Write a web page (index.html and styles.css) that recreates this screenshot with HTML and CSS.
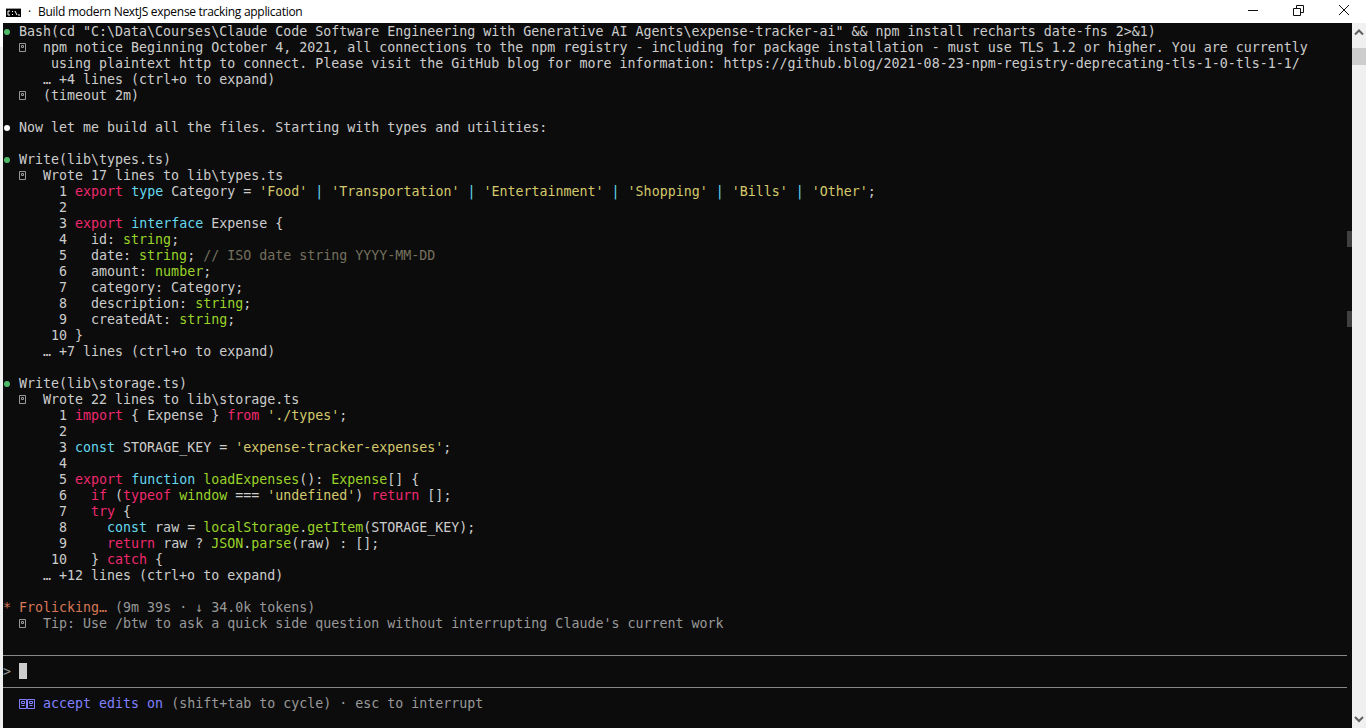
FILE: index.html
```html
<!DOCTYPE html>
<html lang="en">
<head>
    <meta charset="UTF-8">
    <title>Build modern NextJS expense tracking application</title>
    <link rel="stylesheet" href="styles.css">
</head>
<body>

<div class="titlebar">
    <svg class="app-icon" width="15" height="9" viewBox="0 0 15 9">
        <rect width="15" height="9" fill="#000"/>
        <rect x="0" y="0" width="15" height="1" fill="#9a9a9a"/>
        <path d="M4 3H2V7H4M6 3.5H7M6 6.5H7M9 3L11 7M12 7H14" fill="none" stroke="#fff" stroke-width="1"/>
    </svg>
    <span class="title-dot">·</span>
    <span class="title-text">Build modern NextJS expense tracking application</span>
    <div class="win-controls">
        <svg width="46" height="23" viewBox="0 0 46 23"><path d="M20 10.5H30" stroke="#111" fill="none"/></svg>
        <svg width="46" height="23" viewBox="0 0 46 23"><path d="M19.5 8.5H26.5V15.5H19.5ZM22.5 8.5V5.5H29.5V12.5H26.5" stroke="#111" fill="none"/></svg>
        <svg width="46" height="23" viewBox="0 0 46 23"><path d="M19 5L29 15M29 5L19 15" stroke="#111" fill="none"/></svg>
    </div>
</div>

<div class="window">
    <div class="left-edge"></div>

    <div class="terminal">
        <div class="row"><svg class="dot" viewBox="0 0 8 16"><circle cx="4" cy="9" r="3" fill="#4eba65"/></svg> Bash(cd "C:\Data\Courses\Claude Code Software Engineering with Generative AI Agents\expense-tracker-ai" &amp;&amp; npm install recharts date-fns 2&gt;&amp;1)</div>
        <div class="row">  <svg class="tofu" viewBox="0 0 8 16"><path d="M.5 4.5H6.5V12.5H.5ZM2.5 6.5H4.5V8.5H2.5Z" fill="none" stroke="currentColor"/></svg>  npm notice Beginning October 4, 2021, all connections to the npm registry - including for package installation - must use TLS 1.2 or higher. You are currently</div>
        <div class="row">      using plaintext http to connect. Please visit the GitHub blog for more information: https://github.blog/2021-08-23-npm-registry-deprecating-tls-1-0-tls-1-1/</div>
        <div class="row">     … +4 lines (ctrl+o to expand)</div>
        <div class="row">  <svg class="tofu" viewBox="0 0 8 16"><path d="M.5 4.5H6.5V12.5H.5ZM2.5 6.5H4.5V8.5H2.5Z" fill="none" stroke="currentColor"/></svg>  (timeout 2m)</div>
        <div class="row"> </div>
        <div class="row"><svg class="dot" viewBox="0 0 8 16"><circle cx="4" cy="9" r="3" fill="#fff"/></svg> Now let me build all the files. Starting with types and utilities:</div>
        <div class="row"> </div>
        <div class="row"><svg class="dot" viewBox="0 0 8 16"><circle cx="4" cy="9" r="3" fill="#4eba65"/></svg> Write(lib\types.ts)</div>
        <div class="row">  <svg class="tofu" viewBox="0 0 8 16"><path d="M.5 4.5H6.5V12.5H.5ZM2.5 6.5H4.5V8.5H2.5Z" fill="none" stroke="currentColor"/></svg>  Wrote 17 lines to lib\types.ts</div>
        <div class="row">       1 <span class="kw">export</span> <span class="ty">type</span> Category = <span class="str">'Food'</span> <span class="ty">|</span> <span class="str">'Transportation'</span> <span class="ty">|</span> <span class="str">'Entertainment'</span> <span class="ty">|</span> <span class="str">'Shopping'</span> <span class="ty">|</span> <span class="str">'Bills'</span> <span class="ty">|</span> <span class="str">'Other'</span>;</div>
        <div class="row">       2</div>
        <div class="row">       3 <span class="kw">export</span> <span class="ty">interface</span> Expense {</div>
        <div class="row">       4   id: <span class="fn">string</span>;</div>
        <div class="row">       5   date: <span class="fn">string</span>; <span class="cmt">// ISO date string YYYY-MM-DD</span></div>
        <div class="row">       6   amount: <span class="fn">number</span>;</div>
        <div class="row">       7   category: Category;</div>
        <div class="row">       8   description: <span class="fn">string</span>;</div>
        <div class="row">       9   createdAt: <span class="fn">string</span>;</div>
        <div class="row">      10 }</div>
        <div class="row">     … +7 lines (ctrl+o to expand)</div>
        <div class="row"> </div>
        <div class="row"><svg class="dot" viewBox="0 0 8 16"><circle cx="4" cy="9" r="3" fill="#4eba65"/></svg> Write(lib\storage.ts)</div>
        <div class="row">  <svg class="tofu" viewBox="0 0 8 16"><path d="M.5 4.5H6.5V12.5H.5ZM2.5 6.5H4.5V8.5H2.5Z" fill="none" stroke="currentColor"/></svg>  Wrote 22 lines to lib\storage.ts</div>
        <div class="row">       1 <span class="kw">import</span> { Expense } <span class="kw">from</span> <span class="str">'./types'</span>;</div>
        <div class="row">       2</div>
        <div class="row">       3 <span class="ty">const</span> STORAGE_KEY = <span class="str">'expense-tracker-expenses'</span>;</div>
        <div class="row">       4</div>
        <div class="row">       5 <span class="kw">export</span> <span class="ty">function</span> <span class="fn">loadExpenses</span>(): <span class="fn">Expense</span>[] {</div>
        <div class="row">       6   <span class="kw">if</span> (<span class="kw">typeof</span> <span class="fn">window</span> === <span class="str">'undefined'</span>) <span class="kw">return</span> [];</div>
        <div class="row">       7   <span class="kw">try</span> {</div>
        <div class="row">       8     <span class="ty">const</span> raw = <span class="fn">localStorage</span>.<span class="fn">getItem</span>(STORAGE_KEY);</div>
        <div class="row">       9     <span class="kw">return</span> raw ? <span class="fn">JSON</span>.<span class="fn">parse</span>(raw) : [];</div>
        <div class="row">      10   } <span class="kw">catch</span> {</div>
        <div class="row">     … +12 lines (ctrl+o to expand)</div>
        <div class="row"> </div>
        <div class="row"><span class="orange">* Frolicking…</span> <span class="dim">(9m 39s · ↓ 34.0k tokens)</span></div>
        <div class="row dim">  <svg class="tofu" viewBox="0 0 8 16"><path d="M.5 4.5H6.5V12.5H.5ZM2.5 6.5H4.5V8.5H2.5Z" fill="none" stroke="currentColor"/></svg>  Tip: Use /btw to ask a quick side question without interrupting Claude's current work</div>
        <div class="row"> </div>
        <div class="rule-row"><div class="rule"></div></div>
        <div class="row"><span class="dim">&gt;</span> <span class="cursor"></span></div>
        <div class="rule-row"><div class="rule"></div></div>
        <div class="row">  <span class="violet"><svg class="tofu" viewBox="0 0 8 16"><path d="M.5 4.5H7.5V13.5H.5ZM2.5 6.5H5.5V8.5H2.5ZM2.5 10.5H5.5" fill="none" stroke="currentColor"/></svg><svg class="tofu" viewBox="0 0 8 16"><path d="M.5 4.5H7.5V13.5H.5ZM2.5 6.5H5.5V8.5H2.5ZM2.5 10.5H5.5" fill="none" stroke="currentColor"/></svg> accept edits on</span> <span class="dim">(shift+tab to cycle) · esc to interrupt</span></div>

        <div class="scroll-mark mark-a"></div>
        <div class="scroll-mark mark-b"></div>
    </div>

    <div class="scrollbar">
        <svg width="14" height="25" viewBox="0 0 14 25"><path d="M3 11.5L7 7.5L11 11.5" fill="none" stroke="#606060" stroke-width="2"/></svg>
        <div class="thumb"></div>
        <div class="track"></div>
        <svg width="14" height="17" viewBox="0 0 14 17"><path d="M3 6L7 10L11 6" fill="none" stroke="#606060" stroke-width="2"/></svg>
    </div>
</div>

</body>
</html>
```

FILE: styles.css
```css
html, body {
    margin: 0;
    height: 100%;
    overflow: hidden;
}
body {
    display: flex;
    flex-direction: column;
    background: #fff;
}

/* title bar */
.titlebar {
    display: flex;
    align-items: center;
    height: 23px;
    flex: none;
    padding-left: 6px;
    background: #fff;
    color: #000;
    font-family: "Open Sans", sans-serif;
    font-size: 12px;
}
.app-icon {
    flex: none;
    margin-top: 2px;
}
.title-dot {
    width: 17px;
    text-align: center;
}
.title-text {
    letter-spacing: -0.29px;
}
.win-controls {
    display: flex;
    margin-left: auto;
}

/* window */
.window {
    display: flex;
    flex: 1;
    min-height: 0;
}
.left-edge {
    width: 3px;
    flex: none;
    background: #f0f0f0;
    border-top: 24px solid #fff;
}
.terminal {
    position: relative;
    flex: 1;
    min-width: 0;
    background: #0c0c0c;
    color: #cccccc;
    font-family: "DejaVu Sans Mono", monospace;
    font-size: 13.305px;
    line-height: 18px;
}
.row {
    height: 16px;
    white-space: pre;
}
.rule-row {
    display: flex;
    align-items: center;
    height: 16px;
    padding-top: 1px;
    box-sizing: border-box;
}
.rule {
    flex: none;
    width: 1344px;
    height: 1px;
    background: #888888;
}
.dot, .tofu {
    display: inline-block;
    width: 8px;
    height: 16px;
    vertical-align: top;
}
.tofu {
    color: #999999;
}
.violet .tofu {
    color: #8181ff;
}

/* syntax colours */
.kw { color: #f0286c; }
.ty { color: #66d9ef; }
.str { color: #d4c96c; }
.fn { color: #9ad42a; }
.cmt { color: #75715e; }
.orange { color: #d77757; }
.dim { color: #999999; }
.violet { color: #8181ff; }

.cursor {
    display: inline-block;
    width: 8px;
    height: 16px;
    vertical-align: top;
    background: #cccccc;
}

/* scrollbar and its marks */
.scroll-mark {
    position: absolute;
    right: 0;
    width: 5px;
    height: 16px;
    background: #404040;
}
.mark-a { top: 208px; }
.mark-b { top: 288px; }
.scrollbar {
    display: flex;
    flex-direction: column;
    width: 14px;
    flex: none;
    background: #f0f0f0;
}
.thumb {
    height: 17px;
    flex: none;
    background: #cdcdcd;
}
.track {
    flex: 1;
}
```
